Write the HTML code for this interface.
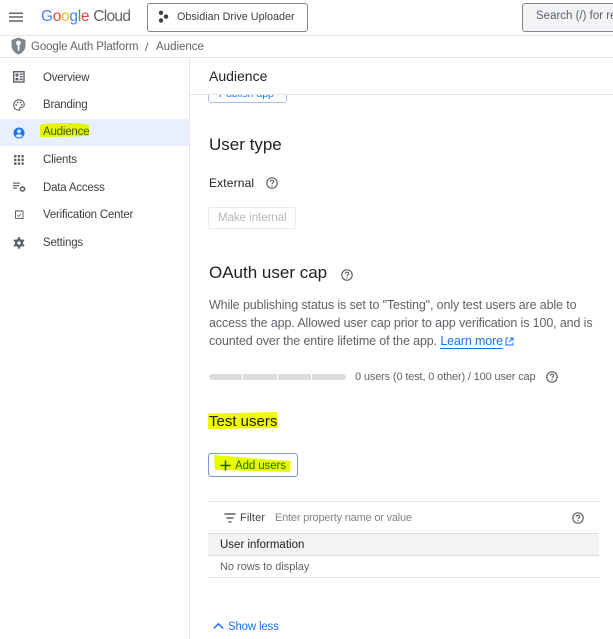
<!DOCTYPE html>
<html><head><meta charset="utf-8"><style>
html,body{margin:0;padding:0;background:#fff}
#p{position:relative;width:613px;height:639px;overflow:hidden;background:#fff;font-family:"Liberation Sans",sans-serif;color:#3c4043;filter:blur(.3px)}
.t{position:absolute;white-space:nowrap;line-height:16px}
.l{position:absolute;background:#e4e5e7}
svg{position:absolute;overflow:visible}
.n{font-size:11.5px;left:43px;color:#3c4043;letter-spacing:-.2px}
.h{font-size:17px;color:#202124;left:209px;line-height:20px}
.b{font-size:12.5px;color:#5f6368;left:209px;line-height:18px;letter-spacing:-.125px}
.q{fill:none;stroke:#5f6368;stroke-width:1.2}
</style></head><body><div id="p">

<svg style="left:9px;top:12px" width="14" height="11"><path d="M0 1.2H14M0 5H14M0 9H14" stroke="#5f6368" stroke-width="1.5"/></svg>

<div class="t" style="left:41px;top:8px;font-size:15.5px;line-height:18px;letter-spacing:-.3px"><span style="color:#4285f4">G</span><span style="color:#ea4335">o</span><span style="color:#fbbc04">o</span><span style="color:#4285f4">g</span><span style="color:#34a853">l</span><span style="color:#ea4335">e</span> <span style="color:#5f6368;letter-spacing:-.7px">Cloud</span></div>

<div style="position:absolute;left:147px;top:3px;width:159px;height:27px;border:1px solid #80868b;border-radius:3px"></div>
<svg style="left:158px;top:10px" width="12" height="14"><circle cx="3" cy="2.8" r="2.2" fill="#3c4043"/><circle cx="3" cy="10.5" r="2.2" fill="#3c4043"/><circle cx="8" cy="6.6" r="2.2" fill="#3c4043"/></svg>
<div class="t" style="left:177px;top:9px;font-size:10.8px;color:#3c4043">Obsidian Drive Uploader</div>

<div style="position:absolute;left:522px;top:3px;width:100px;height:27px;border:1px solid #80868b;border-radius:3px;background:#f1f3f4"></div>
<div class="t" style="left:536px;top:8px;font-size:11.5px;color:#5f6368">Search (/) for res</div>

<div class="l" style="left:0;top:35px;width:613px;height:1px"></div>

<svg style="left:11px;top:37px" width="15" height="18" viewBox="0 0 15 18"><path d="M7.5 0.5L14.5 3V8.5C14.5 12.8 11.5 16 7.5 17.5C3.5 16 .5 12.8 .5 8.5V3Z" fill="#80868b"/><circle cx="7.5" cy="6" r="2.4" fill="#fff"/><rect x="6.7" y="7" width="1.7" height="6.5" fill="#fff"/></svg>
<div class="t" style="left:31px;top:39px;font-size:11.5px;color:#5f6368;letter-spacing:-.1px">Google Auth Platform</div>
<div class="t" style="left:145px;top:39px;font-size:12px;color:#5f6368">/</div>
<div class="t" style="left:156px;top:39px;font-size:11.5px;color:#5f6368">Audience</div>

<div class="l" style="left:0;top:57px;width:613px;height:1px"></div>
<div class="l" style="left:189px;top:57px;width:1px;height:582px"></div>
<div class="l" style="left:190px;top:94px;width:423px;height:1px"></div>

<div style="position:absolute;left:0;top:119px;width:189px;height:27px;background:#e8f0fe"></div>

<svg style="left:13px;top:71px" width="12" height="12" viewBox="0 0 12 12"><rect x=".7" y=".7" width="10.3" height="10.3" fill="none" stroke="#5f6368" stroke-width="1.4"/><rect x="2.5" y="2.5" width="3" height="3" fill="#5f6368"/><rect x="6.7" y="2.5" width="3" height="1.4" fill="#5f6368"/><rect x="6.7" y="5" width="3" height="1.4" fill="#5f6368"/><rect x="2.5" y="7" width="3" height="2.4" fill="#5f6368"/><rect x="6.7" y="7.6" width="3" height="1.6" fill="#5f6368"/></svg>
<div class="t n" style="top:70px">Overview</div>

<svg style="left:13px;top:99px" width="12" height="12" viewBox="0 0 12 12"><path d="M6 .8C3 .8 .7 3 .7 6S3 11.2 6 11.2C7 11.2 7.2 10.5 6.8 9.8C6.4 9 6.9 8.2 7.8 8.2H9C10.3 8.2 11.3 7.2 11.3 5.8C11.3 3 9 .8 6 .8Z" fill="none" stroke="#5f6368" stroke-width="1.1"/><circle cx="3.2" cy="6" r=".9" fill="#5f6368"/><circle cx="4.6" cy="3.5" r=".9" fill="#5f6368"/><circle cx="7.5" cy="3.5" r=".9" fill="#5f6368"/><circle cx="9" cy="5.8" r=".9" fill="#5f6368"/></svg>
<div class="t n" style="top:97px">Branding</div>

<svg style="left:13px;top:127px" width="12" height="12" viewBox="0 0 12 12"><circle cx="6" cy="6" r="5.5" fill="#1a73e8"/><circle cx="6" cy="4.4" r="1.9" fill="#e8f0fe"/><path d="M2.6 9C3.4 7.6 4.7 7.2 6 7.2S8.6 7.6 9.4 9C8.5 10 7.3 10.4 6 10.4S3.5 10 2.6 9Z" fill="#e8f0fe"/></svg>
<svg style="left:39px;top:122px" width="51" height="16" viewBox="0 0 51 16"><path d="M1 3C14 .5 36 0 50 3L50 14C36 14.5 14 15 1 15Z" fill="#e6f500"/></svg>
<div class="t n" style="top:124px;color:#3d5a00">Audience</div>

<svg style="left:14px;top:155px" width="10" height="10" viewBox="0 0 10 10" fill="#5f6368"><rect width="2.4" height="2.4"/><rect x="3.7" width="2.4" height="2.4"/><rect x="7.4" width="2.4" height="2.4"/><rect y="3.7" width="2.4" height="2.4"/><rect x="3.7" y="3.7" width="2.4" height="2.4"/><rect x="7.4" y="3.7" width="2.4" height="2.4"/><rect y="7.4" width="2.4" height="2.4"/><rect x="3.7" y="7.4" width="2.4" height="2.4"/><rect x="7.4" y="7.4" width="2.4" height="2.4"/></svg>
<div class="t n" style="top:152px">Clients</div>

<svg style="left:13px;top:182px" width="13" height="11" viewBox="0 0 13 11"><rect y=".5" width="7" height="1.2" fill="#5f6368"/><rect y="3" width="6" height="1.2" fill="#5f6368"/><rect y="5.5" width="4" height="1.2" fill="#5f6368"/><circle cx="9.5" cy="7" r="2.1" fill="none" stroke="#5f6368" stroke-width="1.6"/></svg>
<div class="t n" style="top:180px">Data Access</div>

<svg style="left:15px;top:210px" width="9" height="9" viewBox="0 0 9 9"><rect x=".5" y="1" width="7.5" height="7.4" fill="none" stroke="#5f6368"/><rect x="2" y="0" width="1" height="1.5" fill="#5f6368"/><rect x="5.5" y="0" width="1" height="1.5" fill="#5f6368"/><path d="M2.5 5.2L3.8 6.4L6 3.8" fill="none" stroke="#5f6368" stroke-width=".9"/></svg>
<div class="t n" style="top:207px">Verification Center</div>

<svg style="left:13px;top:237px" width="12" height="12" viewBox="0 0 12 12"><circle cx="6" cy="6" r="2.9" fill="none" stroke="#5f6368" stroke-width="2.6"/><g stroke="#5f6368" stroke-width="2.2"><path d="M6 .2V2.4M6 9.6V11.8M1 3.1L2.9 4.2M9.1 7.8L11 8.9M1 8.9L2.9 7.8M9.1 4.2L11 3.1"/></g></svg>
<div class="t n" style="top:235px">Settings</div>

<div class="t" style="left:209px;top:68px;font-size:14px;color:#202124">Audience</div>

<div style="position:absolute;left:208px;top:95px;width:77px;height:7px;border:1px solid #a8c1e8;border-top:0;border-radius:0 0 3px 3px"></div>
<div style="position:absolute;left:219px;top:95px;width:58px;height:5px;overflow:hidden"><div class="t" style="left:0;top:-9px;font-size:10.5px;color:#1a73e8">Publish app</div></div>

<div class="t h" style="top:135px">User type</div>
<div class="t" style="left:209px;top:175px;font-size:12px;color:#202124;letter-spacing:.15px">External</div>
<svg style="left:266px;top:177px" width="12" height="12" viewBox="0 0 12 12"><circle class="q" cx="6" cy="6" r="5.2"/><path class="q" d="M4.3 4.8C4.3 3.8 5 3.2 6 3.2S7.7 3.8 7.7 4.7C7.7 5.8 6 5.9 6 7.3"/><circle cx="6" cy="8.9" r=".7" fill="#5f6368"/></svg>

<div style="position:absolute;left:208px;top:207px;width:86px;height:20px;border:1px solid #e8eaed;border-radius:3px"></div>
<div class="t" style="left:218px;top:210px;font-size:11.5px;color:#b4b7ba;letter-spacing:-.03px">Make internal</div>

<div class="t h" style="top:263px">OAuth user cap</div>
<svg style="left:341px;top:269px" width="12" height="12" viewBox="0 0 12 12"><circle class="q" cx="6" cy="6" r="5.2"/><path class="q" d="M4.3 4.8C4.3 3.8 5 3.2 6 3.2S7.7 3.8 7.7 4.7C7.7 5.8 6 5.9 6 7.3"/><circle cx="6" cy="8.9" r=".7" fill="#5f6368"/></svg>

<div class="t b" style="top:296px">While publishing status is set to "Testing", only test users are able to</div>
<div class="t b" style="top:314px">access the app. Allowed user cap prior to app verification is 100, and is</div>
<div class="t b" style="top:332px">counted over the entire lifetime of the app. <span style="color:#1a73e8;border-bottom:1px solid #1a73e8">Learn more</span></div>
<svg style="left:505px;top:337px" width="9" height="9" viewBox="0 0 9 9" fill="none" stroke="#1a73e8"><path d="M3.5 1H1V8H8V5.5M5 1H8V4M8 1L4 5"/></svg>

<div style="position:absolute;left:209px;top:374px;width:33px;height:6px;background:#dadce0;border-radius:3px 0 0 3px"></div>
<div style="position:absolute;left:243px;top:374px;width:34px;height:6px;background:#dadce0"></div>
<div style="position:absolute;left:278px;top:374px;width:33px;height:6px;background:#dadce0"></div>
<div style="position:absolute;left:312px;top:374px;width:34px;height:6px;background:#dadce0;border-radius:0 3px 3px 0"></div>
<div class="t" style="left:355px;top:369px;font-size:11px;color:#5f6368;letter-spacing:-.15px">0 users (0 test, 0 other) / 100 user cap</div>
<svg style="left:546px;top:371px" width="12" height="12" viewBox="0 0 12 12"><circle class="q" cx="6" cy="6" r="5.2"/><path class="q" d="M4.3 4.8C4.3 3.8 5 3.2 6 3.2S7.7 3.8 7.7 4.7C7.7 5.8 6 5.9 6 7.3"/><circle cx="6" cy="8.9" r=".7" fill="#5f6368"/></svg>

<svg style="left:208px;top:412px" width="71" height="17" viewBox="0 0 71 17"><path d="M0 1.5L69 0L70 16L0 17Z" fill="#f0fa00"/></svg>
<div class="t h" style="top:412px;font-size:15px">Test users</div>

<div style="position:absolute;left:208px;top:453px;width:88px;height:22px;border:1px solid #7f9cc9;border-radius:3px"></div>
<svg style="left:214px;top:455px" width="77" height="17" viewBox="0 0 77 17"><path d="M0 0L60 5L77 6L76 17L1 15Z" fill="#e8fb00"/></svg>
<svg style="left:220px;top:460px" width="11" height="11"><path d="M5.5 .5V10.5M.5 5.5H10.5" stroke="#1d5b10" stroke-width="1.5"/></svg>
<div class="t" style="left:235px;top:458px;font-size:11.5px;color:#1f6a0a;letter-spacing:-.1px">Add users</div>

<div class="l" style="left:208px;top:501px;width:391px;height:1px"></div>
<svg style="left:224px;top:513px" width="12" height="10"><path d="M.5 1H11.5M2.5 5H9.5M4.5 9H7.5" stroke="#3c4043" stroke-width="1.2"/></svg>
<div class="t" style="left:240px;top:510px;font-size:11px;color:#3c4043;letter-spacing:.1px">Filter</div>
<div class="t" style="left:275px;top:510px;font-size:11px;color:#80868b;letter-spacing:-.2px">Enter property name or value</div>
<svg style="left:572px;top:512px" width="12" height="12" viewBox="0 0 12 12"><circle class="q" cx="6" cy="6" r="5.2"/><path class="q" d="M4.3 4.8C4.3 3.8 5 3.2 6 3.2S7.7 3.8 7.7 4.7C7.7 5.8 6 5.9 6 7.3"/><circle cx="6" cy="8.9" r=".7" fill="#5f6368"/></svg>

<div style="position:absolute;left:208px;top:533px;width:391px;height:21px;background:#f1f3f4;border-top:1px solid #dadce0;border-bottom:1px solid #dadce0"></div>
<div class="t" style="left:220px;top:537px;font-size:11.5px;color:#202124">User information</div>
<div class="t" style="left:220px;top:559px;font-size:11px;color:#5f6368;letter-spacing:-.03px">No rows to display</div>
<div class="l" style="left:208px;top:577px;width:391px;height:1px"></div>

<svg style="left:213px;top:622px" width="11" height="8"><path d="M.8 6.5L5.5 1.8L10.2 6.5" fill="none" stroke="#1a73e8" stroke-width="1.5"/></svg>
<div class="t" style="left:228px;top:619px;font-size:11.5px;color:#1a73e8;letter-spacing:-.2px">Show less</div>

</div></body></html>
